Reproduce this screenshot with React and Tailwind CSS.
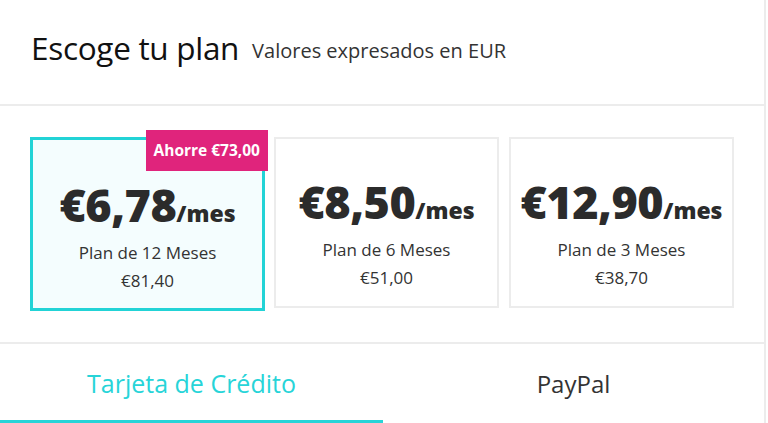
export default function App() {
  const font = { fontFamily: '"Open Sans", "Noto Sans", sans-serif' };
  const Card = ({ price, label, total, active }) => (
    <div
      className={
        active
          ? "relative w-[235px] h-[174px] border-[3px] border-[#22d3d6] bg-[#f4fdfe] flex flex-col items-center"
          : "relative w-[225px] h-[171px] border-2 border-[#ececec] bg-white flex flex-col items-center"
      }
    >
      {active && (
        <div className="absolute right-[-6px] top-[-10px] h-[41px] px-[8px] bg-[#e0247c] text-white text-[15.5px] font-bold flex items-center">
          Ahorre €73,00
        </div>
      )}
      <div className={active ? "mt-[42px] flex items-baseline text-[#2b2b2b]" : "mt-[40px] flex items-baseline text-[#2b2b2b]"}>
        <span className="text-[45px] font-extrabold leading-none tracking-[-0.5px]">{price}</span>
        <span className="text-[23px] font-extrabold leading-none">/mes</span>
      </div>
      <div className="mt-[14px] text-[17px] text-[#333] leading-[23px]">{label}</div>
      <div className="mt-[5px] text-[17px] text-[#333] leading-[23px]">{total}</div>
    </div>
  );
  return (
    <div className="w-[766px] h-[423px] bg-white border-r-2 border-[#ececec] overflow-hidden" style={font}>
      <div className="h-[106px] border-b-2 border-[#ececec] flex items-center pl-[31px] pb-[8px]">
        <span className="text-[31.5px] text-[#111] tracking-[-0.3px]">Escoge tu plan</span>
        <span className="ml-[13px] mt-[5px] text-[20px] text-[#333]">Valores expresados en EUR</span>
      </div>
      <div className="h-[238px] border-b-2 border-[#ececec] flex items-start pt-[31px] pl-[30px]">
        <Card price="€6,78" label="Plan de 12 Meses" total="€81,40" active />
        <div className="w-[9px]" />
        <Card price="€8,50" label="Plan de 6 Meses" total="€51,00" />
        <div className="w-[10px]" />
        <Card price="€12,90" label="Plan de 3 Meses" total="€38,70" />
      </div>
      <div className="flex h-[79px]">
        <div className="w-[383px] flex flex-col">
          <div className="flex-1 flex items-center justify-center pt-[4px] text-[25px] text-[#27d4d8]">Tarjeta de Crédito</div>
          <div className="h-[3px] bg-[#27d4d8]" />
        </div>
        <div className="flex-1 flex flex-col">
          <div className="flex-1 flex items-center justify-center pt-[4px] text-[24px] text-[#333]">PayPal</div>
          <div className="h-[3px]" />
        </div>
      </div>
    </div>
  );
}
